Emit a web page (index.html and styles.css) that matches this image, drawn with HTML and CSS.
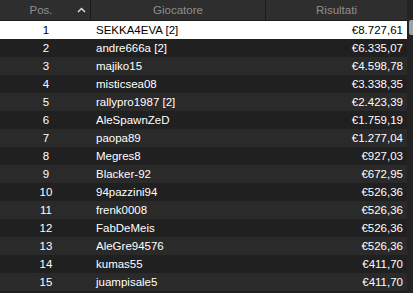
FILE: index.html
```html
<!DOCTYPE html>
<html>
<head>
<meta charset="utf-8">
<link rel="stylesheet" href="styles.css">
</head>
<body>
<div class="wrap">
  <div class="table">
    <div class="head">
      <div class="hcell pos">Pos.<svg class="chev" width="9" height="6" viewBox="0 0 9 6"><path d="M1 5 L4.5 1.5 L8 5" fill="none" stroke="#d8d8d8" stroke-width="1.5"/></svg></div>
      <div class="hcell">Giocatore</div>
      <div class="hcell last">Risultati</div>
    </div>
    <div class="row sel"><span class="c1">1</span><span class="c2">SEKKA4EVA [2]</span><span class="c3">€8.727,61</span></div>
    <div class="row"><span class="c1">2</span><span class="c2">andre666a [2]</span><span class="c3">€6.335,07</span></div>
    <div class="row"><span class="c1">3</span><span class="c2">majiko15</span><span class="c3">€4.598,78</span></div>
    <div class="row"><span class="c1">4</span><span class="c2">misticsea08</span><span class="c3">€3.338,35</span></div>
    <div class="row"><span class="c1">5</span><span class="c2">rallypro1987 [2]</span><span class="c3">€2.423,39</span></div>
    <div class="row"><span class="c1">6</span><span class="c2">AleSpawnZeD</span><span class="c3">€1.759,19</span></div>
    <div class="row"><span class="c1">7</span><span class="c2">paopa89</span><span class="c3">€1.277,04</span></div>
    <div class="row"><span class="c1">8</span><span class="c2">Megres8</span><span class="c3">€927,03</span></div>
    <div class="row"><span class="c1">9</span><span class="c2">Blacker-92</span><span class="c3">€672,95</span></div>
    <div class="row"><span class="c1">10</span><span class="c2">94pazzini94</span><span class="c3">€526,36</span></div>
    <div class="row"><span class="c1">11</span><span class="c2">frenk0008</span><span class="c3">€526,36</span></div>
    <div class="row"><span class="c1">12</span><span class="c2">FabDeMeis</span><span class="c3">€526,36</span></div>
    <div class="row"><span class="c1">13</span><span class="c2">AleGre94576</span><span class="c3">€526,36</span></div>
    <div class="row"><span class="c1">14</span><span class="c2">kumas55</span><span class="c3">€411,70</span></div>
    <div class="row"><span class="c1">15</span><span class="c2">juampisale5</span><span class="c3">€411,70</span></div>
  </div>
  <div class="scroll"><div class="thumb"></div></div>
</div>
</body>
</html>
```
FILE: styles.css
```css
html, body {
  margin: 0;
  padding: 0;
  background: #1f1f1f;
}
body {
  font-family: "Liberation Sans", Arial, Helvetica, sans-serif;
  font-size: 11.5px;
  color: #ffffff;
  width: 413px;
  height: 293px;
  overflow: hidden;
}
.wrap {
  display: flex;
  width: 413px;
}
.table {
  width: 407px;
}
.head {
  display: grid;
  grid-template-columns: 91px 175px 1fr;
  height: 20px;
  background: #2e2e2e;
  border-bottom: 1px solid #1a1a1a;
}
.hcell {
  color: #8e8e8e;
  display: flex;
  align-items: center;
  justify-content: center;
  border-right: 1px solid #1a1a1a;
  position: relative;
}
.hcell.last {
  border-right: none;
}
.hcell.pos {
  padding-right: 8px;
}
.chev {
  position: absolute;
  right: 4px;
  top: 7px;
}
.row {
  display: grid;
  grid-template-columns: 91px 175px 1fr;
  height: 18px;
  align-items: center;
  background: #2a2a2a;
}
.row:nth-child(odd) {
  background: #202020;
}
.row.sel {
  background: #ffffff;
  color: #000000;
}
.c1 {
  text-align: center;
  padding-left: 1px;
}
.c2 {
  padding-left: 5px;
}
.c3 {
  text-align: right;
  padding-right: 4px;
}
.scroll {
  width: 6px;
  height: 293px;
  background: #232323;
  padding-top: 20px;
  box-sizing: border-box;
}
.thumb {
  width: 4px;
  margin-left: 2px;
  height: 15px;
  background: #a0a0a0;
  border-radius: 2px 0 0 2px;
}
```
